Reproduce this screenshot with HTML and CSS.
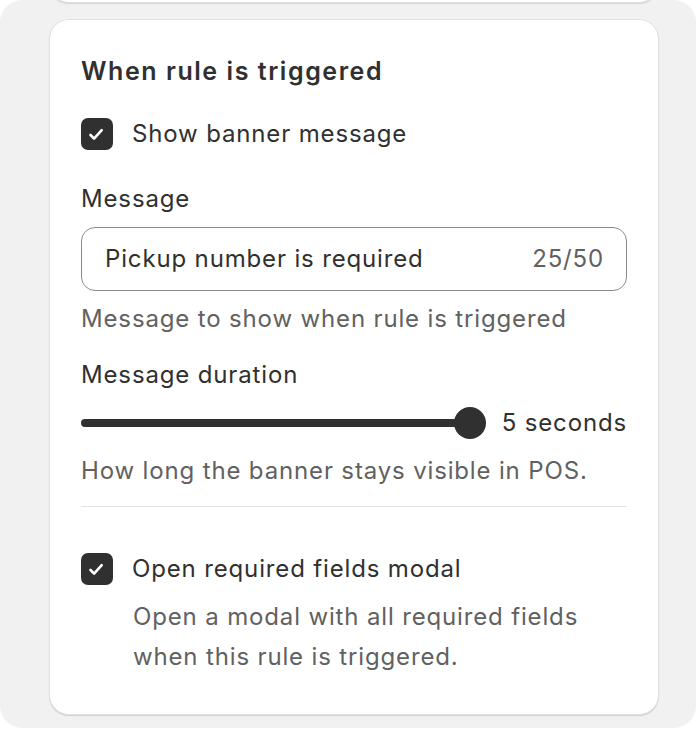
FILE: index.html
```html
<!DOCTYPE html>
<html lang="en">
<head>
<meta charset="utf-8">
<title>When rule is triggered</title>
<link rel="stylesheet" href="styles.css">
</head>
<body>
<div class="panel">
  <div class="prev-card"></div>
  <section class="card">
    <h2 class="title">When rule is triggered</h2>
    <label class="check-row first">
      <span class="box"><svg viewBox="0 0 32 32" width="32" height="32"><path d="M9.5 17l3.6 3.6 7.6-8.4" fill="none" stroke="#fff" stroke-width="2.6" stroke-linecap="round" stroke-linejoin="round"/></svg></span>
      <span class="check-label">Show banner message</span>
    </label>
    <div class="field-label">Message</div>
    <div class="input">
      <span class="input-value">Pickup number is required</span>
      <span class="counter">25/50</span>
    </div>
    <div class="help help-msg">Message to show when rule is triggered</div>
    <div class="field-label duration">Message duration</div>
    <div class="slider-row">
      <div class="slider">
        <div class="track"></div>
        <div class="thumb"></div>
      </div>
      <span class="slider-value">5 seconds</span>
    </div>
    <div class="help help-dur">How long the banner stays visible in POS.</div>
    <hr class="divider">
    <label class="check-row second">
      <span class="box"><svg viewBox="0 0 32 32" width="32" height="32"><path d="M9.5 17l3.6 3.6 7.6-8.4" fill="none" stroke="#fff" stroke-width="2.6" stroke-linecap="round" stroke-linejoin="round"/></svg></span>
      <span class="check-label">Open required fields modal</span>
    </label>
    <p class="desc">Open a modal with all required fields when this rule is triggered.</p>
  </section>
</div>
</body>
</html>
```
FILE: styles.css
```css
* { box-sizing: border-box; }
html, body { margin: 0; padding: 0; background: #ffffff; }
body {
  font-family: Inter, "Noto Sans", sans-serif;
  color: #303030;
  width: 696px;
  height: 730px;
  overflow: hidden;
}
.panel {
  background: #f1f1f1;
  border-radius: 22px;
  height: 728px;
  overflow: hidden;
  padding: 0 37px 0 49px;
  display: flex;
  flex-direction: column;
}
.prev-card {
  flex: none;
  height: 103px;
  margin-top: -100px;
  background: #fff;
  border: 1px solid #e0e0e0;
  border-radius: 20px;
  box-shadow: 0 1px 1px rgba(0, 0, 0, 0.12);
}
.card {
  flex: none;
  margin-top: 16px;
  height: 696px;
  background: #fff;
  border: 1px solid #e1e1e1;
  border-radius: 20px;
  box-shadow: 0 1px 1px rgba(0, 0, 0, 0.14);
  padding: 37px 31px 0 31px;
  display: flex;
  flex-direction: column;
}
.title {
  margin: 0;
  font-size: 25px;
  line-height: 28px;
  font-weight: 600;
  letter-spacing: 1.55px;
  color: #303030;
}
.check-row {
  display: flex;
  align-items: center;
  gap: 19px;
  height: 32px;
}
.check-row.first { margin-top: 33px; }
.check-row.second { margin-top: 46px; }
.box {
  flex: none;
  width: 32px;
  height: 32px;
  border-radius: 7px;
  background: #303030;
  display: flex;
  align-items: center;
  justify-content: center;
}
.check-label, .field-label, .input-value, .slider-value, .counter, .help, .desc {
  font-size: 24px;
  line-height: 28px;
  letter-spacing: 0.85px;
  color: #303030;
}
.field-label { margin-top: 35px; }
.field-label.duration { margin-top: 28px; }
.input {
  margin-top: 14px;
  height: 64px;
  border: 1px solid #8a8a8a;
  border-radius: 14px;
  display: flex;
  align-items: center;
  justify-content: space-between;
  padding: 0 22px 0 23px;
}
.counter { color: #616161; }
.help { color: #616161; }
.help-msg { margin-top: 14px; }
.help-dur { margin-top: 18px; }
.slider-row {
  margin-top: 18px;
  height: 32px;
  display: flex;
  align-items: center;
  gap: 16px;
}
.slider {
  position: relative;
  flex: 1;
  min-width: 0;
  height: 32px;
}
.slider-value {
  flex: none;
  white-space: nowrap;
}
.track {
  position: absolute;
  left: 0;
  right: 10px;
  top: 12px;
  height: 8px;
  border-radius: 4px;
  background: #303030;
}
.thumb {
  position: absolute;
  right: 0;
  top: 0;
  width: 32px;
  height: 32px;
  border-radius: 50%;
  background: #303030;
}
.divider {
  margin: 21px 0 0 0;
  border: none;
  height: 1px;
  background: #e3e3e3;
}
.desc {
  margin: 12px 0 0 52px;
  line-height: 40px;
  color: #616161;
  max-width: 470px;
}
```
